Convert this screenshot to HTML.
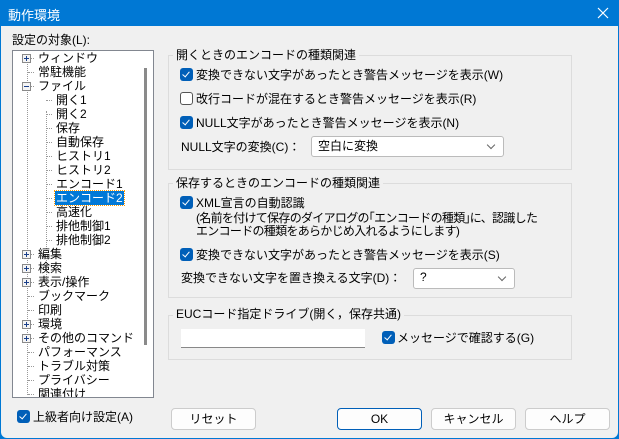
<!DOCTYPE html>
<html><head><meta charset="utf-8"><style>
*{margin:0;padding:0;box-sizing:border-box}
body{width:619px;height:439px;overflow:hidden;background:#0078d4;font-family:"Liberation Sans","Noto Sans CJK JP",sans-serif;font-size:12px;color:#000}
#win{position:absolute;left:1px;top:26px;width:617px;height:412px;background:#f0f0f0;border-radius:0 0 6px 6px}
.a{position:absolute;white-space:nowrap;line-height:14px}
.title{position:absolute;left:8px;top:5px;color:#fff;font-size:13px}
.grp{position:absolute;border:1px solid #dcdcdc}
.gt{position:absolute;background:#f0f0f0;padding:0 3px;line-height:14px;white-space:nowrap}
.cb{position:absolute;width:13px;height:13px;border-radius:3px;background:#005fb8}
.cb:after{content:"";position:absolute;left:4px;top:2px;width:3px;height:6px;border:solid #fff;border-width:0 1.5px 1.5px 0;transform:rotate(40deg)}
.cb.off{background:#fff;border:1px solid #555}
.cb.off:after{display:none}
.combo{position:absolute;background:#fff;border:1px solid #bbb;border-radius:3px;height:21px;padding-left:6px;line-height:19px}
.combo i{position:absolute;right:9px;top:5px;width:6px;height:6px;border:solid #666;border-width:0 1px 1px 0;transform:rotate(45deg)}
.btn{position:absolute;top:382px;height:22px;width:85px;border:1px solid #ccc;border-radius:4px;background:#fdfdfd;text-align:center;line-height:20px}
.tree{position:absolute;left:11px;top:24px;width:142px;height:348px;background:#fff;border:1px solid #828790;overflow:hidden}
.ti{position:absolute;white-space:nowrap;line-height:14px}
.pb{position:absolute;width:9px;height:9px;border:1px solid #8a8a8a;background:#f4f4f4}
.pb:before{content:"";position:absolute;left:1px;top:3px;width:5px;height:1px;background:#1a3f8a}
.pb.p:after{content:"";position:absolute;left:3px;top:1px;width:1px;height:5px;background:#1a3f8a}
.dh{position:absolute;border-top:1px dotted #999;width:6px;height:0}
.dv{position:absolute;border-left:1px dotted #999;width:0}
</style></head><body>
<div class="title">動作環境</div>
<svg style="position:absolute;left:597px;top:7px" width="12" height="12"><path d="M1 1L11 11M11 1L1 11" stroke="#fff" stroke-width="1.2"/></svg>
<div id="win">
<div class="a" style="left:11px;top:7px">設定の対象(L):</div>
<div class="tree">
<div class="dv" style="left:14px;top:4px;height:340px"></div>
<div class="dv" style="left:33px;top:60px;height:172px"></div>
<div style="position:absolute;left:131px;top:17px;width:3px;height:277px;background:#8a8a8a"></div>
</div>
<div id="items"></div>
<div class="cb" style="left:16px;top:384px"></div>
<div class="a" style="left:32px;top:384px">上級者向け設定(A)</div>

<div class="grp" style="left:167px;top:29px;width:404px;height:115px"></div>
<div class="gt" style="left:172px;top:22px">開くときのエンコードの種類関連</div>
<div class="cb" style="left:179px;top:42px"></div><div class="a" style="left:195px;top:42px">変換できない文字があったとき警告メッセージを表示(W)</div>
<div class="cb off" style="left:179px;top:66px"></div><div class="a" style="left:195px;top:66px">改行コードが混在するとき警告メッセージを表示(R)</div>
<div class="cb" style="left:179px;top:90px"></div><div class="a" style="left:195px;top:90px">NULL文字があったとき警告メッセージを表示(N)</div>
<div class="a" style="left:180px;top:114px">NULL文字の変換(C)：</div>
<div class="combo" style="left:310px;top:110px;width:193px">空白に変換<i></i></div>

<div class="grp" style="left:167px;top:157px;width:404px;height:115px"></div>
<div class="gt" style="left:172px;top:150px">保存するときのエンコードの種類関連</div>
<div class="cb" style="left:179px;top:170px"></div><div class="a" style="left:195px;top:170px">XML宣言の自動認識</div>
<div class="a" style="left:195px;top:186px;line-height:13px;letter-spacing:-0.7px">(名前を付けて保存のダイアログの｢エンコードの種類｣に、認識した<br>エンコードの種類をあらかじめ入れるようにします)</div>
<div class="cb" style="left:179px;top:222px"></div><div class="a" style="left:195px;top:222px">変換できない文字があったとき警告メッセージを表示(S)</div>
<div class="a" style="left:180px;top:245px">変換できない文字を置き換える文字(D)：</div>
<div class="combo" style="left:412px;top:242px;width:102px;line-height:16px">?<i></i></div>

<div class="grp" style="left:167px;top:289px;width:404px;height:45px"></div>
<div class="gt" style="left:172px;top:281px">EUCコード指定ドライブ(開く，保存共通)</div>
<div style="position:absolute;left:180px;top:303px;width:184px;height:19px;background:#fff;border-bottom:1px solid #888"></div>
<div class="cb" style="left:381px;top:305px"></div><div class="a" style="left:396px;top:305px">メッセージで確認する(G)</div>

<div class="btn" style="left:170px">リセット</div>
<div class="btn" style="left:336px;border-color:#005fb8">OK</div>
<div class="btn" style="left:430px">キャンセル</div>
<div class="btn" style="left:524px">ヘルプ</div>
</div>
<script>
var it=[["ウィンドウ",1,"p"],["常駐機能",1],["ファイル",1,"m"],["開く1",2],["開く2",2],["保存",2],["自動保存",2],["ヒストリ1",2],["ヒストリ2",2],["エンコード1",2],["エンコード2",2,"s"],["高速化",2],["排他制御1",2],["排他制御2",2],["編集",1,"p"],["検索",1,"p"],["表示/操作",1,"p"],["ブックマーク",1],["印刷",1],["環境",1,"p"],["その他のコマンド",1,"p"],["パフォーマンス",1],["トラブル対策",1],["プライバシー",1],["関連付け",1]];
var h="";
it.forEach(function(e,i){var y=25+i*14;var c=y+7;
if(e[1]==1){h+='<div class="dh" style="left:27px;top:'+c+'px"></div>';
if(e[2]=="p"||e[2]=="m")h+='<div class="pb '+(e[2]=="p"?"p":"")+'" style="left:21px;top:'+(c-4)+'px"></div>';
h+='<div class="ti" style="left:37px;top:'+y+'px">'+e[0]+'</div>';}
else{h+='<div class="dh" style="left:45px;top:'+c+'px"></div>';
if(e[2]=="s")h+='<div class="ti" style="left:54px;top:'+y+'px;background:#0078d7;color:#fff;outline:1px dotted #f90;padding:0 1px">'+e[0]+'</div>';
else h+='<div class="ti" style="left:55px;top:'+y+'px">'+e[0]+'</div>';}
});
var d=document.createElement("div");d.style.cssText="position:absolute;left:0;top:0;width:152px;height:371px;overflow:hidden";d.innerHTML=h;document.getElementById("items").appendChild(d);
</script>
</body></html>
